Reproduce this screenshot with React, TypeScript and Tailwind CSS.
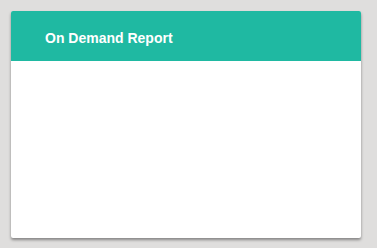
const App = () => {
  return (
    <div className="min-h-[248px] w-full bg-[#dfdedd] pt-[11px] pl-[11px] font-['Liberation_Sans',Arial,sans-serif]">
      <div className="w-[350px] h-[227px] bg-white rounded-[2px] overflow-hidden shadow-[0_2px_3px_rgba(0,0,0,0.4)]">
        <div className="h-[50px] bg-[#1fb9a2] flex items-center pl-[34px] pt-[4px]">
          <span className="text-white text-[14px] font-bold">On Demand Report</span>
        </div>
      </div>
    </div>
  )
}

export default App
